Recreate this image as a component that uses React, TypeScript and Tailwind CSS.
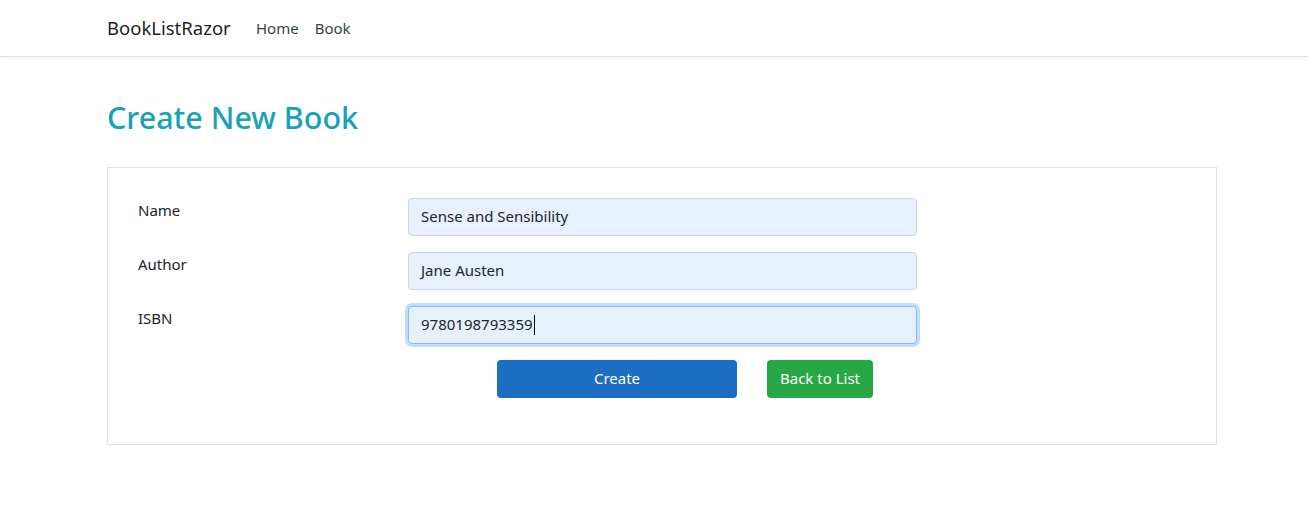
export default function App() {
  return (
    <div className="min-h-[531px] bg-white text-[#212529] font-['Noto_Sans',sans-serif]">
      <nav className="h-[57px] border-b border-[#dee2e6] bg-white shadow-[0_2px_4px_rgba(0,0,0,0.05)]">
        <div className="ml-[107px] flex h-[56px] items-center">
          <span className="w-[124px] text-[18.5px] text-[rgba(0,0,0,0.9)]">BookListRazor</span>
          <div className="ml-[25px] flex gap-[16px] text-[15px] text-[#3a3f44]">
            <span>Home</span>
            <span>Book</span>
          </div>
        </div>
      </nav>

      <main className="ml-[107px] w-[1110px] pt-[42px]">
        <h2 className="text-[30.5px] font-medium leading-[1.2] text-[#17a2b8]">Create New Book</h2>

        <form className="mt-[31px] h-[278px] border border-[#dee2e6] pl-[30px] pt-[30px]">
          <div className="flex flex-col gap-[16px]">
            <Row label="Name" value="Sense and Sensibility" />
            <Row label="Author" value="Jane Austen" />
            <Row label="ISBN" value="9780198793359" focused />
          </div>
          <div className="ml-[359px] mt-[16px] flex gap-[30px]">
            <button type="button" className="h-[38px] w-[240px] rounded-[4px] bg-[#1b6ec2] text-[15px] text-white">
              Create
            </button>
            <button type="button" className="h-[38px] w-[106px] rounded-[4px] bg-[#28a745] text-[15px] text-white">
              Back to List
            </button>
          </div>
        </form>
      </main>
    </div>
  );
}

function Row({ label, value, focused }: { label: string; value: string; focused?: boolean }) {
  return (
    <div className="flex items-start">
      <label className="w-[270px] text-[15px] leading-[24px]">{label}</label>
      <div
        className={
          focused
            ? "flex h-[38px] w-[509px] items-center rounded-[4px] border border-[#80bdff] bg-[#e8f0fe] px-[12px] text-[15px] shadow-[0_0_0_3px_rgba(0,123,255,0.25)]"
            : "flex h-[38px] w-[509px] items-center rounded-[4px] border border-[#ced4da] bg-[#e8f0fe] px-[12px] text-[15px]"
        }
      >
        <span>{value}</span>
        {focused && <span className="ml-[1px] h-[20px] w-[1px] bg-black" />}
      </div>
    </div>
  );
}
